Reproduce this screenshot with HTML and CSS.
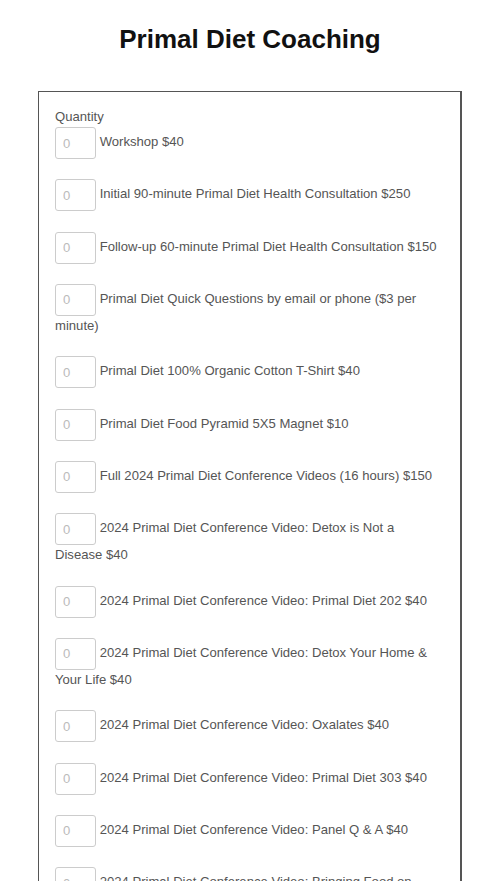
FILE: index.html
```html
<!DOCTYPE html>
<html>
<head>
<meta charset="utf-8">
<link rel="stylesheet" href="styles.css">
</head>
<body>
<h1 class="title">Primal Diet Coaching</h1>
<form class="order">
  <div class="label">Quantity</div>
  <div class="item"><input class="qty" type="text" placeholder="0"> Workshop $40</div>
  <div class="item"><input class="qty" type="text" placeholder="0"> Initial 90-minute Primal Diet Health Consultation $250</div>
  <div class="item"><input class="qty" type="text" placeholder="0"> Follow-up 60-minute Primal Diet Health Consultation $150</div>
  <div class="item"><input class="qty" type="text" placeholder="0"> Primal Diet Quick Questions by email or phone ($3 per minute)</div>
  <div class="item"><input class="qty" type="text" placeholder="0"> Primal Diet 100% Organic Cotton T-Shirt $40</div>
  <div class="item"><input class="qty" type="text" placeholder="0"> Primal Diet Food Pyramid 5X5 Magnet $10</div>
  <div class="item"><input class="qty" type="text" placeholder="0"> Full 2024 Primal Diet Conference Videos (16 hours) $150</div>
  <div class="item"><input class="qty" type="text" placeholder="0"> 2024 Primal Diet Conference Video: Detox is Not a Disease $40</div>
  <div class="item"><input class="qty" type="text" placeholder="0"> 2024 Primal Diet Conference Video: Primal Diet 202 $40</div>
  <div class="item"><input class="qty" type="text" placeholder="0"> 2024 Primal Diet Conference Video: Detox Your Home &amp; Your Life $40</div>
  <div class="item"><input class="qty" type="text" placeholder="0"> 2024 Primal Diet Conference Video: Oxalates $40</div>
  <div class="item"><input class="qty" type="text" placeholder="0"> 2024 Primal Diet Conference Video: Primal Diet 303 $40</div>
  <div class="item"><input class="qty" type="text" placeholder="0"> 2024 Primal Diet Conference Video: Panel Q &amp; A $40</div>
  <div class="item"><input class="qty" type="text" placeholder="0"> 2024 Primal Diet Conference Video: Bringing Food on Airplanes $40</div>
  <div class="item"><input class="qty" type="text" placeholder="0"> 2024 Primal Diet Conference Video: Raw Meat $40</div>
</form>
</body>
</html>
```
FILE: styles.css
```css
html, body {
  margin: 0;
  padding: 0;
  background: #fff;
}
body {
  font-family: "Liberation Sans", Arial, sans-serif;
  color: #555;
  font-size: 13.1px;
  line-height: 20.25px;
}
.title {
  margin: 0;
  padding-top: 24px;
  height: 91px;
  box-sizing: border-box;
  text-align: center;
  font-size: 26px;
  line-height: 30px;
  font-weight: bold;
  color: #111;
}
.order {
  margin: 0 38px;
  border: 1px solid #555;
  border-right-width: 2px;
  padding: 15px 16px 20px 16px;
}
.label {
  line-height: 20px;
}
.item {
  margin-bottom: 20.25px;
}
.qty {
  box-sizing: border-box;
  width: 41px;
  height: 32px;
  margin: 0;
  padding: 0 7px;
  border: 1px solid #ccc;
  border-radius: 3px;
  font-family: "Liberation Sans", Arial, sans-serif;
  font-size: 13.1px;
  color: #555;
  vertical-align: middle;
}
.qty::placeholder {
  color: #bbb;
}
```
